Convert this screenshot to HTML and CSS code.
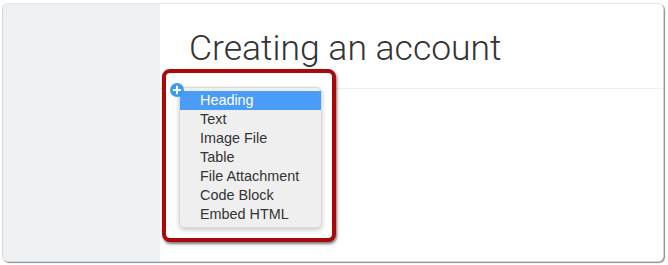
FILE: index.html
```html
<!DOCTYPE html>
<html>
<head>
<meta charset="utf-8">
<link rel="stylesheet" href="styles.css">
</head>
<body>
<div class="card">
  <aside class="sidebar"></aside>
  <main class="main">
    <header class="header">
      <h1 class="title">Creating an account</h1>
    </header>
    <div class="callout">
      <span class="plus">
        <svg width="14" height="14" viewBox="0 0 14 14"><circle cx="7" cy="7" r="7" fill="#3b9bf0"/><path d="M7 2.8v8.4M2.8 7h8.4" stroke="#fff" stroke-width="2"/></svg>
      </span>
      <ul class="menu">
        <li class="item active">Heading</li>
        <li class="item">Text</li>
        <li class="item">Image File</li>
        <li class="item">Table</li>
        <li class="item">File Attachment</li>
        <li class="item">Code Block</li>
        <li class="item">Embed HTML</li>
      </ul>
    </div>
  </main>
</div>
</body>
</html>
```
FILE: styles.css
```css
html, body {
  margin: 0;
  padding: 0;
  background: #ffffff;
}
body {
  width: 668px;
  height: 265px;
  overflow: hidden;
  font-family: "Liberation Sans", Arial, sans-serif;
}
.card {
  box-sizing: border-box;
  margin: 3px 4px 0 2px;
  height: 259px;
  display: flex;
  border: 1px solid #d3d6d9;
  border-top-color: #e3e7eb;
  border-radius: 6px;
  box-shadow: 1px 1px 1px rgba(0, 0, 0, 0.45);
  overflow: hidden;
  background: #fff;
}
.sidebar {
  width: 157px;
  flex: none;
  background: #eef1f4;
}
.main {
  flex: 1;
  position: relative;
  background: #fff;
}
.header {
  height: 85px;
  border-bottom: 1px solid #efefef;
  padding-left: 29px;
  box-sizing: border-box;
}
.title {
  margin: 0;
  padding-top: 24px;
  font-family: Roboto, "Liberation Sans", sans-serif;
  font-size: 35.5px;
  line-height: 40px;
  font-weight: 300;
  color: #333;
  letter-spacing: 0;
}
.callout {
  position: absolute;
  left: 2px;
  top: 65px;
  width: 174px;
  height: 173px;
  box-sizing: border-box;
  border: 4px solid #a90909;
  border-radius: 8px;
  background: #fff;
  box-shadow: 1px 2px 3px rgba(0, 0, 0, 0.55);
}
.plus {
  position: absolute;
  left: 4px;
  top: 10px;
  width: 14px;
  height: 14px;
  z-index: 2;
  display: block;
}
.plus svg {
  display: block;
}
.menu {
  position: absolute;
  left: 13px;
  top: 14px;
  width: 143px;
  height: 141px;
  box-sizing: border-box;
  margin: 0;
  padding: 3px 0;
  list-style: none;
  background: #efefef;
  border: 1px solid #d9d9d9;
  border-radius: 5px;
  box-shadow: 0 2px 5px rgba(0, 0, 0, 0.22);
}
.item {
  height: 19px;
  line-height: 19px;
  padding-left: 20px;
  font-size: 14.4px;
  color: #333;
}
.item.active {
  background: #4a9cf7;
  color: #fff;
}
```
